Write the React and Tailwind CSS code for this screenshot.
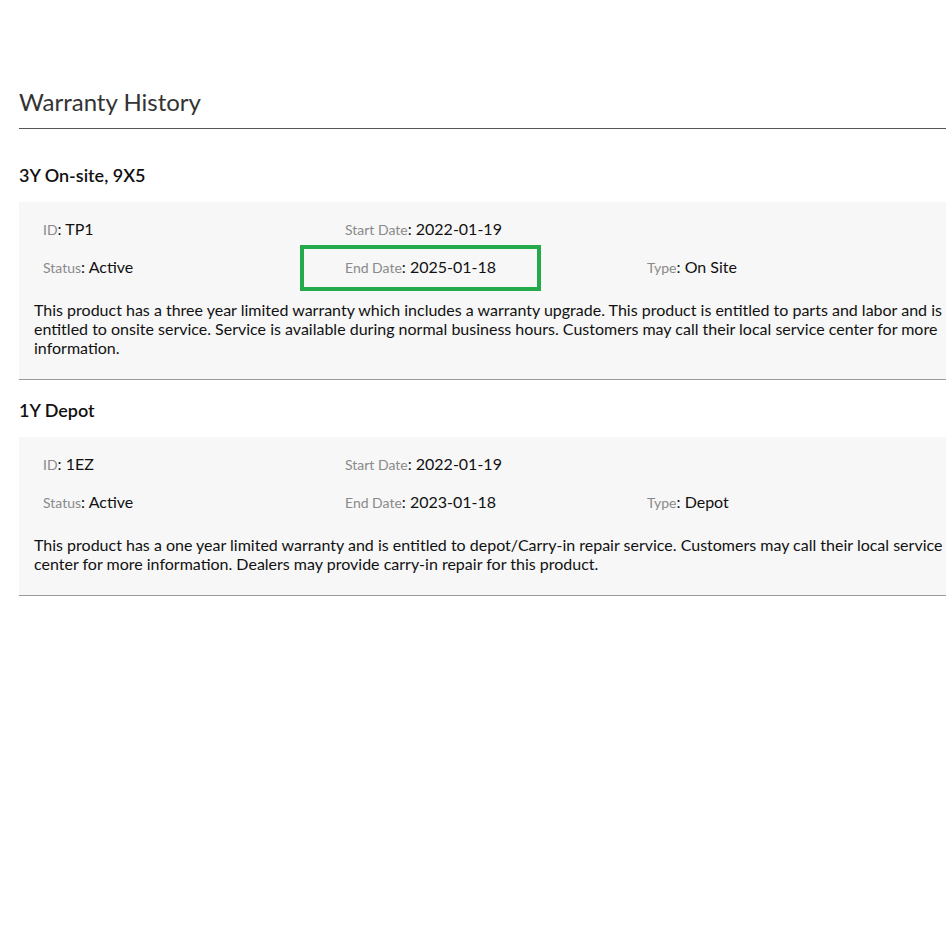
const warranties = [
  {
    name: "3Y On-site, 9X5",
    id: "TP1",
    status: "Active",
    start: "2022-01-19",
    end: "2025-01-18",
    type: "On Site",
    highlight: true,
    text: "This product has a three year limited warranty which includes a warranty upgrade. This product is entitled to parts and labor and is entitled to onsite service. Service is available during normal business hours. Customers may call their local service center for more information.",
  },
  {
    name: "1Y Depot",
    id: "1EZ",
    status: "Active",
    start: "2022-01-19",
    end: "2023-01-18",
    type: "Depot",
    text: "This product has a one year limited warranty and is entitled to depot/Carry-in repair service. Customers may call their local service center for more information. Dealers may provide carry-in repair for this product.",
  },
];

function Field({ label, value, highlight }) {
  return (
    <div className="relative h-[38px] flex items-center">
      {highlight && (
        <div className="absolute left-[-45px] top-[-3px] w-[241px] h-[46px] border-[4px] border-[#22aa4b]" />
      )}
      <span className="text-[14px] text-[#8a8a8a]">{label}</span>
      <span className="text-[16px] text-[#111]">: {value}</span>
    </div>
  );
}

function WarrantyItem({ w }) {
  return (
    <div>
      <h3 className="text-[18px] font-semibold text-[#111] pt-[20px] pb-[17px] leading-[20px]">
        {w.name}
      </h3>
      <div className="bg-[#f7f7f7] border-b border-[#9a9a9a] pt-[8px] pb-[22px]">
        <div className="grid grid-cols-[302px_302px_302px] pl-[24px]">
          <Field label="ID" value={w.id} />
          <Field label="Start Date" value={w.start} />
          <div />
          <Field label="Status" value={w.status} />
          <Field label="End Date" value={w.end} highlight={w.highlight} />
          <Field label="Type" value={w.type} />
        </div>
        <p className="pl-[15px] pr-[16px] pt-[14px] text-[16px] leading-[19px] text-[#111]">
          {w.text}
        </p>
      </div>
    </div>
  );
}

export default function App() {
  return (
    <div
      className="w-[946px] min-h-[943px] bg-white overflow-hidden"
      style={{ fontFamily: "Lato, 'Open Sans', sans-serif" }}
    >
      <div className="w-[940px] ml-[19px] pt-[86px]">
        <h2 className="text-[24px] text-[#333] leading-[32px] pb-[10px] mb-[16px] border-b border-[#555]">
          Warranty History
        </h2>
        {warranties.map((w) => (
          <WarrantyItem key={w.id} w={w} />
        ))}
      </div>
    </div>
  );
}
